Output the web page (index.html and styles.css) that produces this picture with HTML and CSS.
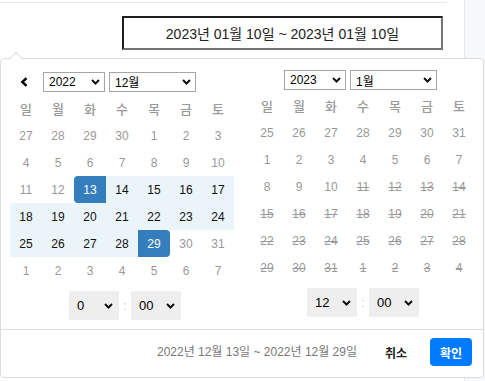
FILE: index.html
```html
<!DOCTYPE html>
<html lang="ko">
<head>
<meta charset="UTF-8">
<meta name="viewport" content="width=device-width, initial-scale=1.0">
<title>기간 선택</title>
<link rel="stylesheet" href="styles.css">
</head>
<body>
<div class="page">
    <main class="content">
        <div class="top-rule"></div>
        <div class="toolbar">
            <div class="range-input">2023년 01월 10일 ~ 2023년 01월 10일</div>
        </div>
    </main>
    <aside class="side"></aside>

    <div class="picker">
        <div class="calendars">
            <div class="calendar left">
                <table class="cal-table">
                    <thead>
                        <tr class="month-row">
                            <th class="prev">
                                <svg width="8" height="10" viewBox="0 0 8 10"><path d="M6.5 1.2L2.3 5l4.2 3.8" fill="none" stroke="#000" stroke-width="2.4"/></svg>
                            </th>
                            <th colspan="5" class="month">
                                <div class="month-selects">
                                    <div class="select select-year"><span>2022</span><svg width="9" height="6" viewBox="0 0 9 6"><path d="M1 1l3.5 3.5L8 1" fill="none" stroke="#111" stroke-width="2"/></svg></div>
                                    <div class="select select-month"><span>12월</span><svg width="9" height="6" viewBox="0 0 9 6"><path d="M1 1l3.5 3.5L8 1" fill="none" stroke="#111" stroke-width="2"/></svg></div>
                                </div>
                            </th>
                            <th></th>
                        </tr>
                        <tr class="week-row">
                            <th>일</th><th>월</th><th>화</th><th>수</th><th>목</th><th>금</th><th>토</th>
                        </tr>
                    </thead>
                    <tbody>
                        <tr><td class="off">27</td><td class="off">28</td><td class="off">29</td><td class="off">30</td><td>1</td><td>2</td><td>3</td></tr>
                        <tr><td>4</td><td>5</td><td>6</td><td>7</td><td>8</td><td>9</td><td>10</td></tr>
                        <tr><td>11</td><td>12</td><td class="active start-date">13</td><td class="in-range">14</td><td class="in-range">15</td><td class="in-range">16</td><td class="in-range">17</td></tr>
                        <tr><td class="in-range">18</td><td class="in-range">19</td><td class="in-range">20</td><td class="in-range">21</td><td class="in-range">22</td><td class="in-range">23</td><td class="in-range">24</td></tr>
                        <tr><td class="in-range">25</td><td class="in-range">26</td><td class="in-range">27</td><td class="in-range">28</td><td class="active end-date">29</td><td>30</td><td>31</td></tr>
                        <tr><td class="off">1</td><td class="off">2</td><td class="off">3</td><td class="off">4</td><td class="off">5</td><td class="off">6</td><td class="off">7</td></tr>
                    </tbody>
                </table>
                <div class="time">
                    <div class="select select-time"><span>0</span><svg width="9" height="6" viewBox="0 0 9 6"><path d="M1 1l3.5 3.5L8 1" fill="none" stroke="#111" stroke-width="2"/></svg></div>
                    <span class="colon">:</span>
                    <div class="select select-time"><span>00</span><svg width="9" height="6" viewBox="0 0 9 6"><path d="M1 1l3.5 3.5L8 1" fill="none" stroke="#111" stroke-width="2"/></svg></div>
                </div>
            </div>

            <div class="calendar right">
                <table class="cal-table">
                    <thead>
                        <tr class="month-row">
                            <th></th>
                            <th colspan="5" class="month">
                                <div class="month-selects">
                                    <div class="select select-year"><span>2023</span><svg width="9" height="6" viewBox="0 0 9 6"><path d="M1 1l3.5 3.5L8 1" fill="none" stroke="#111" stroke-width="2"/></svg></div>
                                    <div class="select select-month"><span>1월</span><svg width="9" height="6" viewBox="0 0 9 6"><path d="M1 1l3.5 3.5L8 1" fill="none" stroke="#111" stroke-width="2"/></svg></div>
                                </div>
                            </th>
                            <th></th>
                        </tr>
                        <tr class="week-row">
                            <th>일</th><th>월</th><th>화</th><th>수</th><th>목</th><th>금</th><th>토</th>
                        </tr>
                    </thead>
                    <tbody>
                        <tr><td class="off">25</td><td class="off">26</td><td class="off">27</td><td class="off">28</td><td class="off">29</td><td class="off">30</td><td class="off">31</td></tr>
                        <tr><td>1</td><td>2</td><td>3</td><td>4</td><td>5</td><td>6</td><td>7</td></tr>
                        <tr><td>8</td><td>9</td><td>10</td><td class="disabled">11</td><td class="disabled">12</td><td class="disabled">13</td><td class="disabled">14</td></tr>
                        <tr><td class="disabled">15</td><td class="disabled">16</td><td class="disabled">17</td><td class="disabled">18</td><td class="disabled">19</td><td class="disabled">20</td><td class="disabled">21</td></tr>
                        <tr><td class="disabled">22</td><td class="disabled">23</td><td class="disabled">24</td><td class="disabled">25</td><td class="disabled">26</td><td class="disabled">27</td><td class="disabled">28</td></tr>
                        <tr><td class="disabled">29</td><td class="disabled">30</td><td class="disabled">31</td><td class="off disabled">1</td><td class="off disabled">2</td><td class="off disabled">3</td><td class="off disabled">4</td></tr>
                    </tbody>
                </table>
                <div class="time">
                    <div class="select select-time"><span>12</span><svg width="9" height="6" viewBox="0 0 9 6"><path d="M1 1l3.5 3.5L8 1" fill="none" stroke="#111" stroke-width="2"/></svg></div>
                    <span class="colon">:</span>
                    <div class="select select-time"><span>00</span><svg width="9" height="6" viewBox="0 0 9 6"><path d="M1 1l3.5 3.5L8 1" fill="none" stroke="#111" stroke-width="2"/></svg></div>
                </div>
            </div>
        </div>

        <div class="picker-buttons">
            <span class="selected-range">2022년 12월 13일 ~ 2022년 12월 29일</span>
            <button class="btn btn-cancel" type="button">취소</button>
            <button class="btn btn-apply" type="button">확인</button>
        </div>
    </div>
</div>
</body>
</html>
```

FILE: styles.css
```css
body {
    margin: 0;
    font-family: "Liberation Sans", "Noto Sans CJK KR", sans-serif;
    background-color: #fff;
}
.page {
    display: flex;
    height: 381px;
    position: relative;
    overflow: hidden;
}
.content {
    width: 465px;
    box-sizing: border-box;
    border-right: 1px solid #e4e7ec;
}
.side {
    flex: 1;
    background-color: #f7f8fa;
}
.top-rule {
    width: 447px;
    height: 2px;
    border-bottom: 1px solid #e3e7ee;
}
.toolbar {
    display: flex;
    justify-content: flex-end;
    padding: 13px 21px 0 0;
}
.range-input {
    width: 321px;
    height: 34px;
    box-sizing: border-box;
    border: 2px solid;
    border-color: #1f1f1f #747474 #747474 #1f1f1f;
    display: flex;
    align-items: center;
    justify-content: center;
    font-size: 14px;
    color: #222;
}

/* date range popup */
.picker {
    position: absolute;
    top: 58px;
    left: 0;
    width: 484px;
    height: 320px;
    box-sizing: border-box;
    border: 1px solid #ddd;
    border-radius: 4px;
    background-color: #fff;
}
.picker::before {
    content: '';
    position: absolute;
    top: -7px;
    left: 8px;
    border-left: 7px solid transparent;
    border-right: 7px solid transparent;
    border-bottom: 7px solid #ccc;
}
.picker::after {
    content: '';
    position: absolute;
    top: -6px;
    left: 9px;
    border-left: 6px solid transparent;
    border-right: 6px solid transparent;
    border-bottom: 6px solid #fff;
}
.calendars {
    display: flex;
}
.calendar {
    padding: 9px 8px 9px 9px;
}
.cal-table {
    border-collapse: collapse;
    border-spacing: 0;
}
.cal-table th,
.cal-table td {
    width: 32px;
    height: 27px;
    padding: 0;
    text-align: center;
    font-size: 12px;
    font-weight: normal;
    color: #999;
}
.week-row th {
    font-size: 13px;
    font-weight: 500;
}
.calendar.right .month-row th {
    height: 24px;
}
.cal-table th.prev {
    text-align: left;
    padding-left: 10px;
    box-sizing: border-box;
}
.cal-table th.prev svg {
    display: block;
}
.month-selects {
    display: flex;
    gap: 4px;
    padding-left: 1px;
}
.select {
    display: flex;
    align-items: center;
    justify-content: space-between;
    box-sizing: border-box;
    color: #000;
    background-color: #fff;
}
.select-year,
.select-month {
    height: 20px;
    border: 1px solid #a6a6a6;
    padding: 0 4px 0 5px;
    font-size: 12px;
}
.select-year {
    width: 62px;
}
.select-month {
    width: 87px;
}
.cal-table td.in-range {
    background-color: #ebf4f8;
    color: #111;
}
.cal-table td.active {
    background-color: #357ebd;
    color: #fff;
}
.cal-table td.start-date {
    border-radius: 4px 0 0 4px;
}
.cal-table td.end-date {
    border-radius: 0 4px 4px 0;
}
.cal-table td.disabled {
    text-decoration: line-through;
}
.time {
    display: flex;
    justify-content: center;
    align-items: center;
    margin-top: 7px;
}
.calendar.left .time {
    padding-left: 6px;
}
.select-time {
    width: 50px;
    height: 29px;
    padding: 0 6px 0 8px;
    background-color: #eee;
    font-size: 13px;
}
.colon {
    color: #ccc;
    font-size: 12px;
    width: 12px;
    text-align: center;
}
.picker-buttons {
    display: flex;
    justify-content: flex-end;
    align-items: flex-start;
    border-top: 1px solid #ddd;
    padding: 8px 11px 0 0;
}
.selected-range {
    font-size: 12px;
    color: #777;
    line-height: 28px;
    margin-right: 18px;
}
.btn {
    width: 42px;
    height: 28px;
    padding: 0;
    border: 0;
    border-radius: 4px;
    font-family: "Liberation Sans", "Noto Sans CJK KR", sans-serif;
    font-size: 12px;
    font-weight: bold;
}
.btn-cancel {
    background-color: transparent;
    color: #222;
}
.btn-apply {
    margin-left: 13px;
    background-color: #007bff;
    color: #fff;
}
```
